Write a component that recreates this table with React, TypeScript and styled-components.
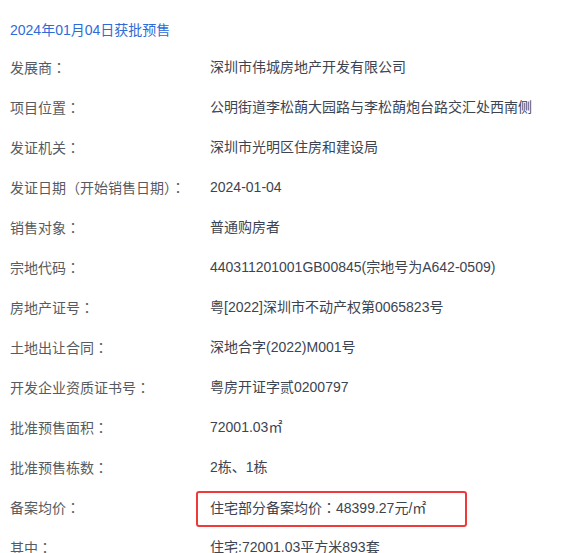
import React from "react";
import styled, { createGlobalStyle } from "styled-components";

const Global = createGlobalStyle`
  html, body { margin: 0; padding: 0; background: #ffffff; }
  body { font-family: "Liberation Sans", "Noto Sans CJK SC", sans-serif; }
`;

const Page = styled.div`
  width: 575px;
  height: 553px;
  overflow: hidden;
  padding: 20px 0 0 10px;
  box-sizing: border-box;
  font-size: 14px;
`;

const Title = styled.div`
  color: #2f6bd6;
  line-height: 20px;
  height: 20px;
  margin-bottom: 7px;
`;

const List = styled.div`
  display: flex;
  flex-direction: column;
`;

const Row = styled.div`
  display: grid;
  grid-template-columns: 200px 1fr;
  height: 40px;
  align-items: center;
  line-height: 20px;
`;

const Label = styled.div`
  color: #575b61;
  white-space: nowrap;
`;

const Value = styled.div`
  color: #3c4452;
  white-space: nowrap;
`;

const Colon = styled.span`
  font-family: "Noto Sans CJK TC", "Noto Sans CJK SC", sans-serif;
`;

const Highlight = styled.div`
  align-self: end;
  margin-left: -14px;
  width: 271px;
  height: 36px;
  box-sizing: border-box;
  border: 2px solid #f03a3a;
  border-radius: 3px;
  padding: 4px 0 0 12px;
  color: #3c4452;
  white-space: nowrap;
`;

type Item = { label: string; value: string; highlight?: boolean };

const items: Item[] = [
  { label: "发展商：", value: "深圳市伟城房地产开发有限公司" },
  { label: "项目位置：", value: "公明街道李松蓢大园路与李松蓢炮台路交汇处西南侧" },
  { label: "发证机关：", value: "深圳市光明区住房和建设局" },
  { label: "发证日期（开始销售日期）：", value: "2024-01-04" },
  { label: "销售对象：", value: "普通购房者" },
  { label: "宗地代码：", value: "440311201001GB00845(宗地号为A642-0509)" },
  { label: "房地产证号：", value: "粤[2022]深圳市不动产权第0065823号" },
  { label: "土地出让合同：", value: "深地合字(2022)M001号" },
  { label: "开发企业资质证书号：", value: "粤房开证字贰0200797" },
  { label: "批准预售面积：", value: "72001.03㎡" },
  { label: "批准预售栋数：", value: "2栋、1栋" },
  { label: "备案均价：", value: "住宅部分备案均价：48399.27元/㎡", highlight: true },
  { label: "其中：", value: "住宅:72001.03平方米893套" },
];

function withColons(text: string) {
  const parts = text.split("：");
  return parts.map((p, i) => (
    <React.Fragment key={i}>
      {p}
      {i < parts.length - 1 && <Colon>：</Colon>}
    </React.Fragment>
  ));
}

export default function App() {
  return (
    <>
      <Global />
      <Page>
        <Title>2024年01月04日获批预售</Title>
        <List>
          {items.map((it) => (
            <Row key={it.label}>
              <Label>{withColons(it.label)}</Label>
              {it.highlight ? (
                <Highlight>{withColons(it.value)}</Highlight>
              ) : (
                <Value>{withColons(it.value)}</Value>
              )}
            </Row>
          ))}
        </List>
      </Page>
    </>
  );
}
